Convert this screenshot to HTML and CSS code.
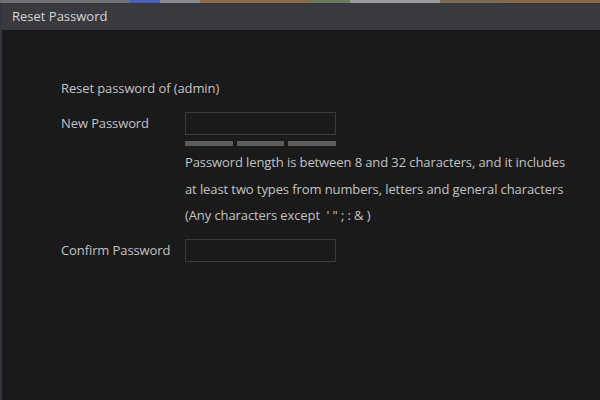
FILE: index.html
```html
<!DOCTYPE html>
<html>
<head>
<meta charset="utf-8">
<link rel="stylesheet" href="styles.css">
</head>
<body>
<div class="strip">
  <span class="s1"></span><span class="s2"></span><span class="s3"></span><span class="s4"></span><span class="s5"></span><span class="s6"></span><span class="s7"></span><span class="s8"></span>
</div>
<div class="dialog">
  <div class="header">Reset Password</div>
  <div class="content">
    <div class="row intro">Reset password of (admin)</div>
    <div class="row field">
      <div class="label">New Password</div>
      <div class="control">
        <div class="input"></div>
        <div class="strength"><span></span><span></span><span></span></div>
        <div class="hint">
          <div>Password length is between 8 and 32 characters, and it includes</div>
          <div>at least two types from numbers, letters and general characters</div>
          <div>(Any characters except &nbsp;' " ; : &amp; )</div>
        </div>
      </div>
    </div>
    <div class="row field confirm">
      <div class="label">Confirm Password</div>
      <div class="control">
        <div class="input"></div>
      </div>
    </div>
  </div>
</div>
</body>
</html>
```
FILE: styles.css
```css
* { box-sizing: border-box; }
html, body { margin: 0; padding: 0; }
body {
  width: 600px;
  height: 400px;
  overflow: hidden;
  background: #1a1a1a;
  font-family: "Open Sans", "Noto Sans", sans-serif;
  color: #c2c2c2;
  display: flex;
  flex-direction: column;
}
.strip {
  height: 3px;
  display: flex;
  flex: none;
}
.strip span { display: block; height: 3px; }
.s1 { width: 130px; background: #6d6f74; }
.s2 { width: 30px; background: #4a5fb8; }
.s3 { width: 40px; background: #8a8c92; }
.s4 { width: 110px; background: #8a6a45; }
.s5 { width: 40px; background: #6b7a5a; }
.s6 { width: 90px; background: #98999e; }
.s7 { width: 60px; background: #7a6a50; }
.s8 { flex: 1; background: #86694a; }
.dialog {
  flex: 1;
  display: flex;
  flex-direction: column;
  border-left: 2px solid #34353a;
}
.header {
  height: 27px;
  background: #393a40;
  color: #d4d4d6;
  font-size: 13px;
  line-height: 26px;
  padding-left: 10px;
}
.content {
  padding: 48px 0 0 59px;
  display: flex;
  flex-direction: column;
  font-size: 13px;
  letter-spacing: -0.1px;
}
.row { display: flex; }
.intro { height: 20px; line-height: 20px; }
.field { margin-top: 14px; }
.label {
  width: 124px;
  line-height: 22px;
}
.control { display: flex; flex-direction: column; }
.input {
  width: 151px;
  height: 23px;
  border: 1px solid #3a3a3a;
  background: #1b1b1b;
}
.strength {
  display: flex;
  gap: 4px;
  margin-top: 6px;
  width: 151px;
}
.strength span {
  flex: 1;
  height: 5px;
  background: #5b5b5b;
}
.hint {
  margin-top: 3px;
  line-height: 26.5px;
  white-space: nowrap;
}
.confirm { margin-top: 10px; }
```
